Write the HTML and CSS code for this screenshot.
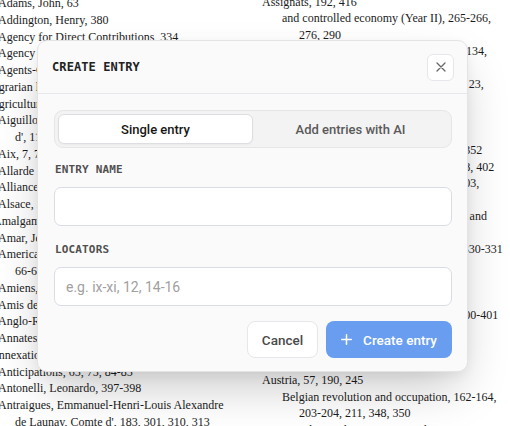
FILE: index.html
```html
<!DOCTYPE html>
<html lang="en">
<head>
    <meta charset="UTF-8">
    <meta name="viewport" content="width=device-width, initial-scale=1.0">
    <title>Index - Create entry</title>
    <link rel="stylesheet" href="styles.css">
</head>
<body>

<div class="index-page">
    <div class="col col-left">
        <div class="ln">Adams, John, 63</div>
        <div class="ln">Addington, Henry, 380</div>
        <div class="ln">Agency for Direct Contributions, 334</div>
        <div class="ln">Agency for Indirect Taxes, 334</div>
        <div class="ln">Agents-General of the Clergy, 48</div>
        <div class="ln shift">Agrarian law, 243, 275</div>
        <div class="ln shift">Agriculture, 12-14, 226</div>
        <div class="ln">Aiguillon, Emmanuel-Armand, duc</div>
        <div class="ln cont">d', 113, 118</div>
        <div class="ln">Aix, 7, 75, 93</div>
        <div class="ln">Allarde law, 124</div>
        <div class="ln">Alliance system, 57, 190</div>
        <div class="ln">Alsace, 209, 238</div>
        <div class="ln shift-half">Amalgamation, 295</div>
        <div class="ln">Amar, Jean-Pierre-André, 281</div>
        <div class="ln">American War of Independence,</div>
        <div class="ln cont">66-69, 73</div>
        <div class="ln">Amiens, Peace of, 392</div>
        <div class="ln">Amis des Noirs, 162</div>
        <div class="ln">Anglo-Russian convention, 385</div>
        <div class="ln">Annates, 116</div>
        <div class="ln shift">Annexations, 209, 348</div>
        <div class="ln">Anticipations, 65, 75, 84-85</div>
        <div class="ln">Antonelli, Leonardo, 397-398</div>
        <div class="ln">Antraigues, Emmanuel-Henri-Louis Alexandre</div>
        <div class="ln cont">de Launay, Comte d', 183, 301, 310, 313</div>
    </div>
    <div class="col col-right">
        <div class="ln">Assignats, 192, 416</div>
        <div class="ln sub">and controlled economy (Year II), 265-266,</div>
        <div class="ln sub-cont">276, 290</div>
        <div class="ln sub">and counter-revolutions, 96, 108, 131-134,</div>
        <div class="ln sub-cont">162, 186</div>
        <div class="ln sub">and finances of the Church, 116, 122-123,</div>
        <div class="ln sub-cont">130</div>
        <div class="ln sub">and inflation, 170-172, 231</div>
        <div class="ln sub">and the Mandats, 341</div>
        <div class="ln sub">and peasant land purchases, 339, 351-352</div>
        <div class="ln sub">and prices of grains, 226, 381, 397-398, 402</div>
        <div class="ln sub">and sale of the biens nationaux, 201-203,</div>
        <div class="ln sub-cont">211</div>
        <div class="ln sub">and taxation, 186, 298; see also: Paper and</div>
        <div class="ln sub-cont">Currency</div>
        <div class="ln">Assembly of Notables, 36-38, 42, 44, 63, 330-331</div>
        <div class="ln">Assembly of the Clergy, 48</div>
        <div class="ln">Atheism, 285</div>
        <div class="ln">Aubry, François, 320</div>
        <div class="ln">Auckland, William Eden, Lord, 81, 392, 400-401</div>
        <div class="ln">Audit Office, 117</div>
        <div class="ln">Augereau, Pierre-François-Charles, 349</div>
        <div class="ln">Austerlitz, 403</div>
        <div class="ln">Austria, 57, 190, 245</div>
        <div class="ln sub">Belgian revolution and occupation, 162-164,</div>
        <div class="ln sub-cont">203-204, 211, 348, 350</div>
        <div class="ln sub">French Revolution, outset and, 147</div>
    </div>
</div>

<div class="modal">
    <div class="modal-header">
        <h2 class="modal-title">CREATE ENTRY</h2>
        <button class="close-btn" type="button" aria-label="Close">
            <svg width="10" height="10" viewBox="0 0 10 10" fill="none" stroke="#666" stroke-width="1.3" stroke-linecap="round">
                <path d="M1 1L9 9M9 1L1 9"/>
            </svg>
        </button>
    </div>
    <div class="modal-body">
        <div class="segment">
            <button class="seg-tab active" type="button">Single entry</button>
            <button class="seg-tab" type="button">Add entries with AI</button>
        </div>

        <label class="field-label" for="entry-name">ENTRY NAME</label>
        <input class="field-input" type="text" id="entry-name">

        <label class="field-label second" for="locators">LOCATORS</label>
        <input class="field-input" type="text" id="locators" placeholder="e.g. ix-xi, 12, 14-16">

        <div class="modal-actions">
            <button class="btn btn-cancel" type="button">Cancel</button>
            <button class="btn btn-create" type="button">
                <svg width="11" height="11" viewBox="0 0 11 11" fill="none" stroke="#fff" stroke-width="1.5" stroke-linecap="round">
                    <path d="M5.5 0.75V10.25M0.75 5.5H10.25"/>
                </svg>
                Create entry
            </button>
        </div>
    </div>
</div>

</body>
</html>
```

FILE: styles.css
```css
/* Global Styles */
* {
    box-sizing: border-box;
}

body {
    margin: 0;
    padding: 0;
    background: #ffffff;
    font-family: 'Liberation Serif', serif;
    color: #1c1c1c;
    height: 426px;
    overflow: hidden;
}

/* Index page behind the dialog */
.index-page {
    display: grid;
    grid-template-columns: 264px 1fr;
    margin: -5px 0 0 -2px;
    font-size: 12px;
    line-height: 16.75px;
}

.col {
    overflow: hidden;
}

.col-right {
    margin-top: -1px;
    line-height: 16.45px;
}

.ln {
    white-space: nowrap;
}

.ln.shift {
    margin-left: -8px;
}

.ln.shift-half {
    margin-left: -5px;
}

.ln.cont {
    padding-left: 17px;
}

.ln.sub {
    padding-left: 20px;
}

.ln.sub-cont {
    padding-left: 37px;
}

/* Dialog */
.modal {
    position: absolute;
    left: 37px;
    top: 40px;
    width: 431px;
    background: #fafafa;
    border: 1px solid #e4e4e7;
    border-radius: 10px;
    box-shadow: 0 22px 48px -8px rgba(0, 0, 0, 0.22), 0 4px 12px rgba(0, 0, 0, 0.05);
    font-family: 'Roboto', sans-serif;
}

.modal-header {
    display: flex;
    align-items: center;
    justify-content: space-between;
    height: 53px;
    padding: 0 13px 0 14px;
    border-bottom: 1px solid #e5e7eb;
}

.modal-title {
    margin: 0;
    font-family: 'DejaVu Sans Mono', monospace;
    font-size: 12px;
    font-weight: bold;
    letter-spacing: 0.1px;
    color: #222;
}

.close-btn {
    display: flex;
    align-items: center;
    justify-content: center;
    width: 27px;
    height: 27px;
    padding: 0;
    background: #fff;
    border: 1px solid #e5e7eb;
    border-radius: 6px;
    cursor: pointer;
}

.modal-body {
    display: flex;
    flex-direction: column;
    padding: 16px 15px 13px 16px;
}

/* Segmented control */
.segment {
    display: grid;
    grid-template-columns: 1fr 1fr;
    height: 38px;
    padding: 3px;
    background: #f3f3f4;
    border: 1px solid #e6e6e8;
    border-radius: 9px;
}

.seg-tab {
    font-family: 'Roboto', sans-serif;
    font-size: 13px;
    font-weight: 500;
    color: #5a5a5a;
    background: transparent;
    border: 1px solid transparent;
    border-radius: 6px;
    cursor: pointer;
}

.seg-tab.active {
    color: #161616;
    background: #fff;
    border-color: #dedee2;
    box-shadow: 0 1px 2px rgba(0, 0, 0, 0.04);
}

/* Fields */
.field-label {
    display: block;
    margin: 14px 0 9px 1px;
    font-family: 'DejaVu Sans Mono', monospace;
    font-size: 11px;
    font-weight: bold;
    line-height: 16px;
    letter-spacing: 0.15px;
    color: #505050;
}

.field-label.second {
    margin-top: 16px;
}

.field-input {
    width: 100%;
    height: 39px;
    padding: 0 11px;
    font-family: 'Roboto', sans-serif;
    font-size: 14px;
    color: #222;
    background: #fff;
    border: 1px solid #d9dde5;
    border-radius: 7px;
    outline: none;
}

.field-input::placeholder {
    color: #a0a0a0;
}

/* Footer buttons */
.modal-actions {
    display: flex;
    justify-content: flex-end;
    gap: 8px;
    margin-top: 15px;
}

.btn {
    display: flex;
    align-items: center;
    justify-content: center;
    height: 37px;
    font-family: 'Roboto', sans-serif;
    font-size: 13.5px;
    font-weight: 500;
    border-radius: 8px;
    cursor: pointer;
}

.btn-cancel {
    width: 71px;
    color: #4a4a4a;
    background: #fff;
    border: 1px solid #e5e7eb;
}

.btn-create {
    width: 126px;
    gap: 11px;
    color: #fff;
    background: #699df0;
    border: none;
}
```
